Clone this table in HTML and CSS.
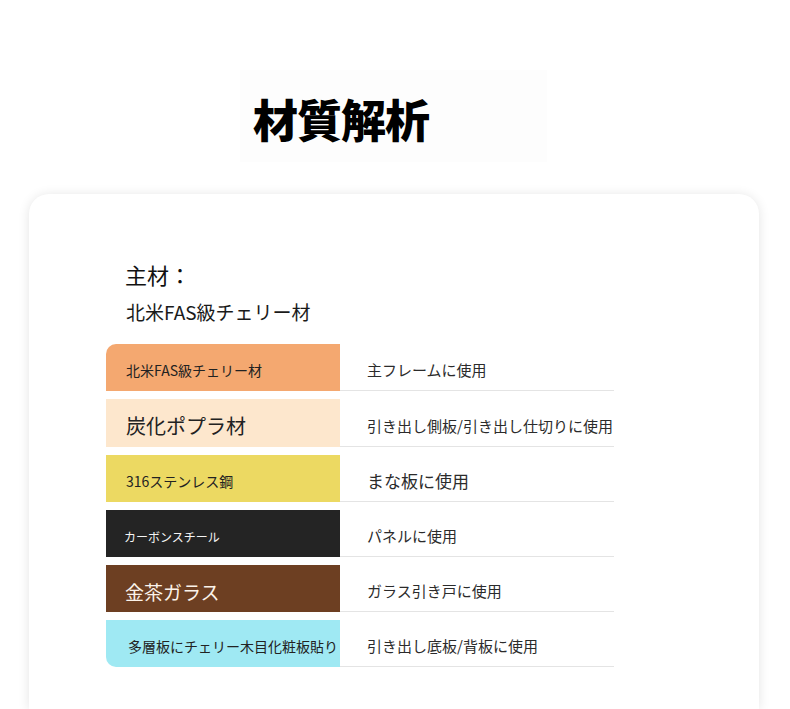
FILE: index.html
```html
<!DOCTYPE html>
<html lang="ja">
<head>
<meta charset="utf-8">
<title>材質解析</title>
<link rel="stylesheet" href="styles.css">
</head>
<body>
<header class="head">
  <h1 class="title">材質解析</h1>
</header>
<section class="card">
  <div class="label">主材：</div>
  <div class="sub">北米FAS級チェリー材</div>
  <div class="table">
    <div class="row">
      <div class="mat mat-cherry">北米FAS級チェリー材</div>
      <div class="use">主フレームに使用</div>
    </div>
    <div class="row">
      <div class="mat mat-poplar">炭化ポプラ材</div>
      <div class="use">引き出し側板/引き出し仕切りに使用</div>
    </div>
    <div class="row">
      <div class="mat mat-steel">316ステンレス鋼</div>
      <div class="use use-lg">まな板に使用</div>
    </div>
    <div class="row">
      <div class="mat mat-carbon">カーボンスチール</div>
      <div class="use">パネルに使用</div>
    </div>
    <div class="row">
      <div class="mat mat-glass">金茶ガラス</div>
      <div class="use">ガラス引き戸に使用</div>
    </div>
    <div class="row">
      <div class="mat mat-ply">多層板にチェリー木目化粧板貼り</div>
      <div class="use">引き出し底板/背板に使用</div>
    </div>
  </div>
</section>
</body>
</html>
```
FILE: styles.css
```css
* { box-sizing: border-box; }
html, body { margin: 0; padding: 0; background: #fff; }
body {
  font-family: "Noto Sans CJK JP", "Noto Sans", sans-serif;
  color: #222;
  width: 790px;
  height: 709px;
  overflow: hidden;
}
.head {
  padding-top: 70px;
  padding-left: 240px;
  height: 194px;
}
.title {
  display: inline-block;
  margin: 0;
  width: 307px;
  height: 92px;
  padding: 22px 0 0 13px;
  background: #fdfdfd;
  font-size: 45px;
  line-height: 54px;
  font-weight: 900;
  color: #000;
  letter-spacing: -1px;
}
.card {
  margin: 0 31px 0 29px;
  height: 515px;
  background: #fff;
  border-radius: 20px 20px 0 0;
  box-shadow: 0 1px 12px rgba(0, 0, 0, 0.11);
  padding: 65px 0 0 77px;
}
.label {
  margin-left: 19px;
  font-size: 22px;
  line-height: 30px;
  color: #111;
}
.sub {
  margin-left: 20px;
  margin-top: 9px;
  font-size: 19px;
  line-height: 28px;
  color: #1a1a1a;
}
.table {
  margin-top: 18px;
  width: 508px;
  display: flex;
  flex-direction: column;
  gap: 8px;
}
.row {
  display: flex;
  height: 47px;
}
.row:nth-child(2) { height: 48px; }
.mat {
  width: 234px;
  flex: none;
  display: flex;
  align-items: center;
  padding: 5px 0 0 20px;
  color: #222;
  white-space: nowrap;
}
.use {
  flex: 1;
  display: flex;
  align-items: center;
  padding: 5px 0 0 27px;
  font-size: 15px;
  color: #2b2b2b;
  border-bottom: 1px solid #e4e4e4;
  white-space: nowrap;
}
.use-lg { font-size: 17px; }
.mat-cherry {
  background: #f4a870;
  font-size: 14px;
  border-top-left-radius: 10px;
}
.mat-poplar {
  background: #fde7cd;
  font-size: 20px;
}
.mat-steel {
  background: #ecd962;
  font-size: 14px;
}
.mat-carbon {
  background: #242424;
  color: #f4f4f4;
  font-size: 12px;
  padding-left: 18px;
}
.mat-glass {
  background: #6d3f22;
  color: #fbf3ea;
  font-size: 19px;
  padding-left: 19px;
}
.mat-ply {
  background: #9fe9f3;
  font-size: 14px;
  padding-left: 22px;
  border-bottom-left-radius: 10px;
}
```
